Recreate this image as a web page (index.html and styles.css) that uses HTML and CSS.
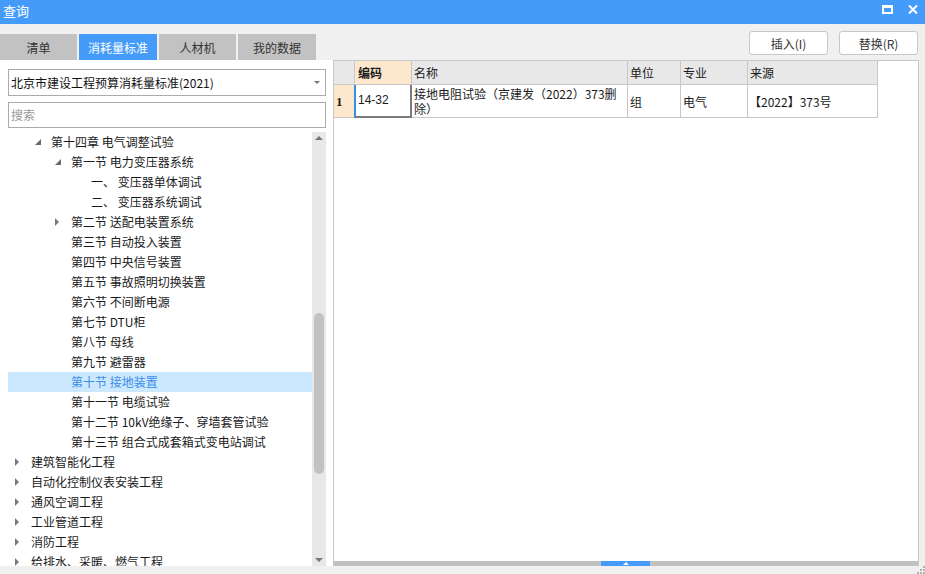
FILE: index.html
```html
<!DOCTYPE html>
<html lang="zh">
<head>
<meta charset="utf-8">
<title>查询</title>
<link rel="stylesheet" href="styles.css">
</head>
<body>
<div class="window">
  <div class="titlebar">
    <span class="title">查询</span>
    <div class="controls">
      <svg class="ctl" width="11" height="9" viewBox="0 0 11 9"><rect x="1" y="1.5" width="9" height="6.5" fill="none" stroke="#fff" stroke-width="2"/><rect x="0" y="0" width="11" height="3" fill="#fff"/></svg>
      <svg class="ctl" width="10" height="9" viewBox="0 0 10 9"><path d="M1 0.5 L9 8.5 M9 0.5 L1 8.5" stroke="#fff" stroke-width="2"/></svg>
    </div>
  </div>
  <div class="toolbar">
    <div class="tabs">
      <div class="tab">清单</div>
      <div class="tab active">消耗量标准</div>
      <div class="tab">人材机</div>
      <div class="tab">我的数据</div>
    </div>
    <div class="actions">
      <button class="btn">插入(I)</button>
      <button class="btn">替换(R)</button>
    </div>
  </div>
  <div class="content">
    <div class="left">
      <div class="select"><span>北京市建设工程预算消耗量标准(2021)</span><i class="caret"></i></div>
      <div class="search">搜索</div>
      <div class="tree">
        <div class="list">
          <div class="row l1"><i class="tw exp"></i>第十四章 电气调整试验</div>
          <div class="row l2"><i class="tw exp"></i>第一节 电力变压器系统</div>
          <div class="row l3"><i class="tw"></i>一、 变压器单体调试</div>
          <div class="row l3"><i class="tw"></i>二、 变压器系统调试</div>
          <div class="row l2"><i class="tw col"></i>第二节 送配电装置系统</div>
          <div class="row l2"><i class="tw"></i>第三节 自动投入装置</div>
          <div class="row l2"><i class="tw"></i>第四节 中央信号装置</div>
          <div class="row l2"><i class="tw"></i>第五节 事故照明切换装置</div>
          <div class="row l2"><i class="tw"></i>第六节 不间断电源</div>
          <div class="row l2"><i class="tw"></i>第七节 DTU柜</div>
          <div class="row l2"><i class="tw"></i>第八节 母线</div>
          <div class="row l2"><i class="tw"></i>第九节 避雷器</div>
          <div class="row l2 sel"><i class="tw"></i>第十节 接地装置</div>
          <div class="row l2"><i class="tw"></i>第十一节 电缆试验</div>
          <div class="row l2"><i class="tw"></i>第十二节 10kV绝缘子、穿墙套管试验</div>
          <div class="row l2"><i class="tw"></i>第十三节 组合式成套箱式变电站调试</div>
          <div class="row l0"><i class="tw col"></i>建筑智能化工程</div>
          <div class="row l0"><i class="tw col"></i>自动化控制仪表安装工程</div>
          <div class="row l0"><i class="tw col"></i>通风空调工程</div>
          <div class="row l0"><i class="tw col"></i>工业管道工程</div>
          <div class="row l0"><i class="tw col"></i>消防工程</div>
          <div class="row l0"><i class="tw col"></i>给排水、采暖、燃气工程</div>
        </div>
        <div class="vscroll">
          <i class="up"></i>
          <div class="thumb"></div>
          <div class="spacer"></div>
          <i class="down"></i>
        </div>
      </div>
    </div>
    <div class="right">
      <div class="grid">
        <div class="tr head">
          <div class="c c0"></div>
          <div class="c c1 peach bold">编码</div>
          <div class="c c2">名称</div>
          <div class="c c3">单位</div>
          <div class="c c4">专业</div>
          <div class="c c5">来源</div>
        </div>
        <div class="tr body">
          <div class="c c0 peach num">1</div>
          <div class="c c1 editing">14-32</div>
          <div class="c c2">接地电阻试验（京建发（2022）373删除）</div>
          <div class="c c3">组</div>
          <div class="c c4">电气</div>
          <div class="c c5">【2022】373号</div>
        </div>
      </div>
      <div class="hscroll"><div class="hthumb"><i class="uptri"></i></div></div>
    </div>
  </div>
  <div class="status">
    <svg class="grip" width="8" height="8" viewBox="0 0 8 8"><rect x="6" y="0" width="2" height="2" fill="#b0b0b0"/><rect x="3" y="3" width="2" height="2" fill="#b0b0b0"/><rect x="6" y="3" width="2" height="2" fill="#b0b0b0"/><rect x="0" y="6" width="2" height="2" fill="#b0b0b0"/><rect x="3" y="6" width="2" height="2" fill="#b0b0b0"/><rect x="6" y="6" width="2" height="2" fill="#b0b0b0"/></svg>
  </div>
</div>
</body>
</html>
```

FILE: styles.css
```css
* { box-sizing: border-box; }
html, body { margin: 0; padding: 0; }
body {
  background: #f0f0f0;
  font-family: "Noto Sans CJK SC", "Noto Sans", sans-serif;
  font-size: 12px;
  color: #1a1a1a;
  width: 925px;
  height: 574px;
  overflow: hidden;
}
.window { display: flex; flex-direction: column; width: 925px; height: 574px; }

.titlebar {
  height: 24px;
  background: #459bf9;
  display: flex;
  align-items: center;
  justify-content: space-between;
  color: #fff;
}
.title { font-size: 13px; padding-left: 3px; line-height: 22px; margin-top: -2px; }
.controls { display: flex; align-items: center; gap: 15px; padding-right: 7px; margin-top: -6px; }
.ctl { display: block; }

.toolbar {
  height: 36px;
  display: flex;
  justify-content: space-between;
}
.tabs { display: flex; align-items: flex-end; gap: 2px; }
.tab {
  width: 77px;
  height: 26px;
  background: #c2c2c2;
  color: #333;
  display: flex;
  align-items: center;
  justify-content: center;
  font-size: 12px;
}
.tab:nth-child(2), .tab:nth-child(4) { width: 78px; }
.tab.active { background: #459bf9; color: #fff; }
.actions { display: flex; gap: 11px; padding: 7px 7px 0 0; }
.btn {
  width: 79px;
  height: 24px;
  background: #fff;
  border: 1px solid #c8c8c8;
  border-radius: 3px;
  font-family: inherit;
  font-size: 12px;
  color: #333;
  padding: 0;
}

.content { display: flex; height: 506px; }
.left {
  width: 333px;
  background: #fff;
  padding: 9px 7px 0 8px;
  display: flex;
  flex-direction: column;
}
.select {
  height: 27px;
  border: 1px solid #ababab;
  display: flex;
  align-items: center;
  justify-content: space-between;
  padding: 0 5px 0 2px;
  font-size: 12px;
  color: #111;
}
.caret {
  width: 0; height: 0;
  border-left: 3px solid transparent;
  border-right: 3px solid transparent;
  border-top: 3px solid #777;
}
.search {
  margin-top: 6px;
  height: 26px;
  border: 1px solid #ababab;
  color: #9a9a9a;
  padding-left: 2px;
  display: flex;
  align-items: center;
}
.tree {
  margin-top: 4px;
  height: 435px;
  display: flex;
  overflow: hidden;
}
.list { width: 304px; }
.row {
  height: 20px;
  display: flex;
  align-items: center;
  white-space: nowrap;
  color: #1a1a1a;
  line-height: 18px;
}
.row.l0 { padding-left: 7px; }
.row.l1 { padding-left: 27px; }
.row.l2 { padding-left: 47px; }
.row.l3 { padding-left: 67px; }
.row.sel { background: #cce8ff; color: #3a8ee8; }
.tw { width: 16px; height: 20px; display: flex; align-items: center; flex: none; }
.tw.exp::before {
  content: "";
  width: 0; height: 0;
  border-left: 6px solid transparent;
  border-bottom: 6px solid #6a6a6a;
  margin-top: 1px;
}
.tw.col::before {
  content: "";
  width: 0; height: 0;
  border-left: 4px solid #7a7a7a;
  border-top: 4px solid transparent;
  border-bottom: 4px solid transparent;
}
.vscroll {
  width: 14px;
  background: #e8e8e8;
  display: flex;
  flex-direction: column;
  align-items: center;
}
.up, .down { width: 0; height: 0; border-left: 4px solid transparent; border-right: 4px solid transparent; }
.up { border-bottom: 4px solid #777; margin-top: 4px; }
.down { border-top: 4px solid #777; margin-bottom: 4px; }
.thumb {
  width: 10px;
  height: 161px;
  margin-top: 173px;
  background: #c2c2c2;
  border-radius: 5px;
}
.spacer { flex: 1; }

.right {
  width: 586px;
  height: 506px;
  background: #fff;
  border: 1px solid #c8c8c8;
  border-bottom: none;
  display: flex;
  flex-direction: column;
}
.grid { flex: 1; }
.tr { display: flex; }
.c {
  border-right: 1px solid #c8c8c8;
  border-bottom: 1px solid #c8c8c8;
  padding-left: 2px;
  display: flex;
  align-items: center;
  line-height: 15px;
  flex: none;
}
.head .c { height: 24px; background: #e8e8e8; }
.body .c { height: 33px; }
.c0 { width: 21px; }
.c1 { width: 57px; }
.c2 { width: 216px; }
.c3 { width: 53px; }
.c4 { width: 67px; }
.c5 { width: 130px; }
.head .c1 { padding-left: 3px; }
.head .peach, .body .peach { background: #fde8cd; }
.bold { font-weight: bold; }
.num { font-family: "Liberation Serif", serif; font-weight: bold; font-size: 13px; padding-left: 2px; }
.editing {
  border-left: 2px solid #3a8ee8;
  border-right: 2px solid #7a7a7a;
  border-bottom: 2px solid #7a7a7a;
  font-family: "Liberation Sans", sans-serif;
  font-size: 12px;
  padding-left: 2px;
  margin-left: -1px;
  width: 58px;
}
.body .c2 { padding-right: 2px; align-items: flex-start; padding-top: 1px; line-height: 15px; }
.body .c5 { padding-left: 1px; }

.hscroll {
  height: 5px;
  background: #c0c0c0;
  display: flex;
}
.hthumb {
  margin-left: 267px;
  width: 49px;
  height: 5px;
  background: #459bf9;
  display: flex;
  justify-content: center;
  align-items: flex-end;
}
.uptri {
  width: 0; height: 0;
  border-left: 3px solid transparent;
  border-right: 3px solid transparent;
  border-bottom: 3px solid #fff;
  margin-bottom: 1px;
}

.status {
  height: 8px;
  display: flex;
  justify-content: flex-end;
  align-items: flex-end;
}
.grip { display: block; margin-right: 0; }
```
